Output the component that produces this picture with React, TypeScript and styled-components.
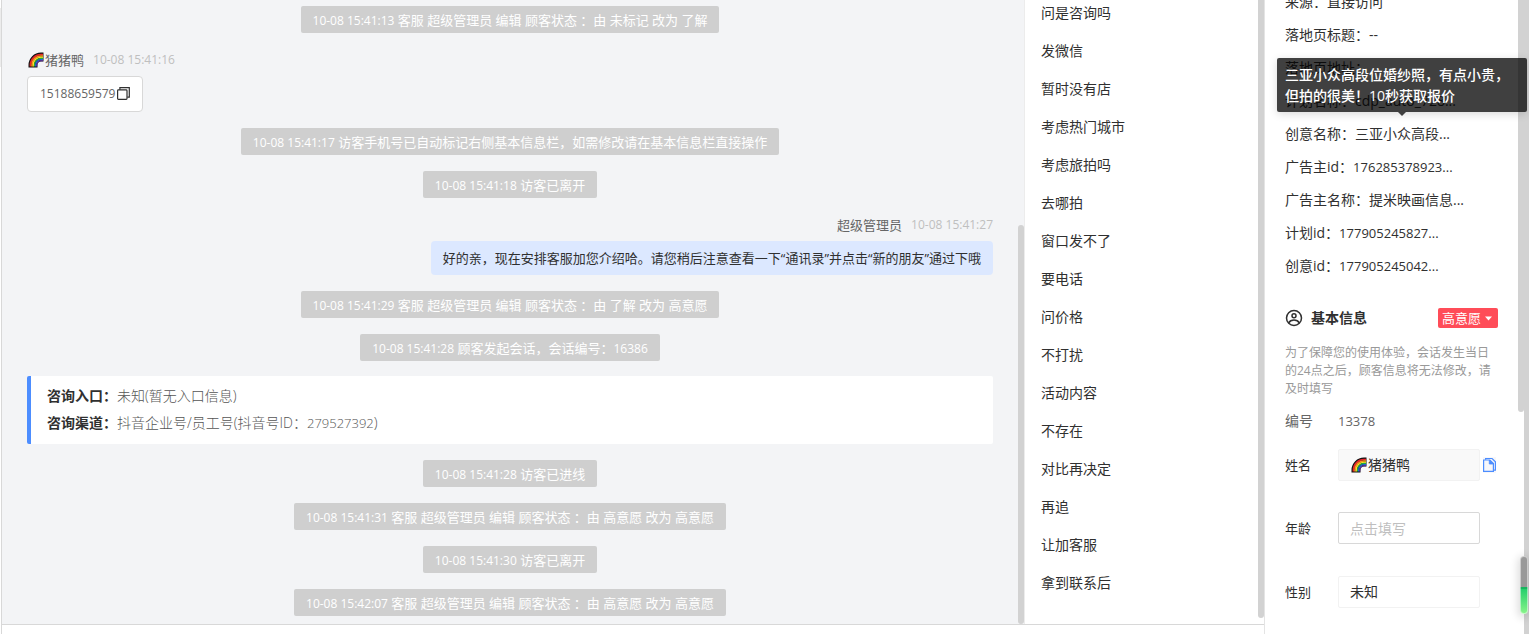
import React from 'react';
import styled, { createGlobalStyle } from 'styled-components';

const Global = createGlobalStyle`
  * { box-sizing: border-box; }
  body {
    margin: 0;
    background: #fff;
    color: #303030;
    font: 14px/20px 'Open Sans', 'Noto Sans CJK SC', sans-serif;
  }
  button, input, select { font: inherit; color: inherit; }
`;

const Page = styled.div`
  display: flex;
  height: 100vh;
  overflow: hidden;
`;

const Rail = styled.div`
  flex: none;
  width: 2px;
  border-right: 1px solid #d8d8d8;
  &::before {
    content: '';
    display: block;
    height: 59px;
    margin-top: 8px;
    background: #ececec;
  }
`;

const Workspace = styled.div`
  flex: 1;
  min-width: 0;
  display: flex;
  flex-direction: column;
`;

const Columns = styled.div`
  flex: 1;
  min-height: 0;
  display: flex;
`;

const Composer = styled.div`
  flex: none;
  height: 10px;
  border-top: 1px solid #d8d8d8;
`;

const Chat = styled.main`
  flex: 1;
  min-width: 0;
  display: flex;
  background: #f3f4f6;
  overflow: hidden;
`;

const Messages = styled.div`
  flex: 1;
  min-width: 0;
  padding: 6px 25px 0;
  display: flex;
  flex-direction: column;
  gap: 16px;
  font-size: 13px;
`;

const Notice = styled.div`
  flex: none;
  align-self: center;
  height: 27px;
  padding: 0 12px;
  border-radius: 2px;
  background: #cfcfcf;
  color: #fff;
  line-height: 28px;
  white-space: nowrap;
`;

const Digits = styled.span<{ $size?: number }>`
  font-size: ${p => p.$size ?? 12}px;
`;

const Message = styled.div<{ $own?: boolean }>`
  display: flex;
  flex-direction: column;
  align-items: ${p => (p.$own ? 'flex-end' : 'flex-start')};
  gap: 5px;
`;

const Sender = styled.div`
  display: flex;
  align-items: center;
  color: #666;
  line-height: 22px;
`;

const Stamp = styled.time`
  margin-left: 9px;
  color: #bfbfbf;
  font-size: 12px;
`;

const Bubble = styled.div<{ $own?: boolean }>`
  display: flex;
  align-items: center;
  gap: 2px;
  height: ${p => (p.$own ? 34 : 36)}px;
  padding: 0 12px;
  border: ${p => (p.$own ? '0' : '1px solid #d8d8d8')};
  border-radius: 4px;
  background: ${p => (p.$own ? '#dce8ff' : '#fff')};
  color: ${p => (p.$own ? '#303030' : '#666')};
  white-space: nowrap;
`;

const IconButton = styled.button`
  display: flex;
  padding: 0;
  border: 0;
  background: none;
  color: #303030;
  cursor: pointer;
`;

const SourceCard = styled.dl`
  margin: -1px 0 0;
  padding: 6px 16px 8px;
  height: 68px;
  border-left: 4px solid #4c8dff;
  border-radius: 2px;
  background: #fff;
  font-size: 14px;
  line-height: 27px;
`;

const SourceLine = styled.div`
  display: flex;
  dt { font-weight: 700; }
  dd { margin: 0; color: #555; font-weight: 300; }
`;

const ScrollTrack = styled.div`
  flex: none;
  display: flex;
  flex-direction: column;
  width: 6px;
`;

const Thumb = styled.div<{ $size: number; $atEnd?: boolean }>`
  flex: none;
  height: ${p => p.$size}%;
  margin-top: ${p => (p.$atEnd ? 'auto' : '0')};
  border-radius: ${p => (p.$atEnd ? '3px' : '0 0 3px 3px')};
  background: #d2d2d2;
`;

const Tags = styled.aside`
  flex: none;
  width: 240px;
  display: flex;
  border-left: 1px solid #ececec;
`;

const TagList = styled.ul`
  flex: 1;
  margin: -6px 0 0;
  padding: 0 16px;
  list-style: none;
  line-height: 38px;
`;

const Details = styled.aside`
  flex: none;
  width: 260px;
  display: flex;
  border-left: 1px solid #e4e4e4;
`;

const DetailsBody = styled.div`
  flex: 1;
  min-width: 0;
  padding-left: 20px;
`;

const Facts = styled.dl`
  margin: -15px 0 0;
  line-height: 33px;
`;

const Fact = styled.div`
  position: relative;
  display: flex;
  height: 33px;
  white-space: nowrap;
  dd { margin: 0; }
`;

const Tooltip = styled.div`
  position: absolute;
  z-index: 2;
  left: -8px;
  bottom: 38px;
  width: 250px;
  padding: 6px 8px;
  border-radius: 2px;
  background: rgba(0, 0, 0, 0.75);
  box-shadow: 0 2px 8px rgba(0, 0, 0, 0.15);
  color: #fff;
  line-height: 21px;
  font-weight: 500;
  white-space: normal;
  &::after {
    content: '';
    position: absolute;
    top: 100%;
    left: 50%;
    margin-left: -4px;
    border: 4px solid transparent;
    border-bottom: 0;
    border-top-color: #404040;
  }
`;

const Head = styled.div`
  display: flex;
  align-items: center;
  height: 20px;
  margin: 26px 20px 0 0;
  h2 { flex: 1; margin: 0 0 0 8px; font-size: 14px; font-weight: 700; line-height: 20px; }
`;

const Status = styled.button`
  display: flex;
  align-items: center;
  gap: 4px;
  width: 60px;
  height: 20px;
  padding: 0 4px;
  border: 0;
  border-radius: 2px;
  background: #ff4c58;
  color: #fff;
  font-size: 13px;
  line-height: 20px;
  white-space: nowrap;
`;

const Hint = styled.p`
  margin: 16px 22px 0 0;
  color: #999;
  font-size: 12px;
  line-height: 18px;
`;

const Row = styled.div<{ $gap: number; $muted?: boolean }>`
  display: flex;
  align-items: center;
  min-height: 32px;
  margin-top: ${p => p.$gap}px;
  color: ${p => (p.$muted ? '#666' : '#303030')};
`;

const Label = styled.label<{ $size: number }>`
  width: 53px;
  font-size: ${p => p.$size}px;
`;

const field = `
  width: 142px;
  height: 32px;
  padding: 0 11px;
  border-radius: 2px;
  font-size: 14px;
  outline: 0;
`;

const NameBox = styled.div`
  display: flex;
  align-items: center;
  background: #f9f9f9;
  border: 1px solid #f2f2f2;
  ${field}
  input { flex: 1; min-width: 0; padding: 0; border: 0; background: none; outline: 0; }
`;

const TextInput = styled.input`
  border: 1px solid #d8d8d8;
  background: #fff;
  ${field}
  &::placeholder { color: #bfbfbf; opacity: 1; }
`;

const Select = styled.select`
  appearance: none;
  border: 1px solid #f2f2f2;
  background: #fff;
  ${field}
`;

const CopyButton = styled(IconButton)`
  margin-left: 3px;
  background: #f7f7fa;
`;

const WindowScroll = styled.div`
  flex: none;
  position: relative;
  width: 5px;
  background: #d2d2d2;
`;

const Meter = styled.div`
  position: absolute;
  right: 1px;
  bottom: 20px;
  width: 8px;
  height: 58px;
  border: 1px solid rgba(255, 255, 255, 0.5);
  border-radius: 4px;
  background: linear-gradient(#999 0 31px, #18b45e 31px 33px, #25cf6c 33px, #8af58a) border-box;
  box-shadow: 0 2px 8px 2px rgba(0, 0, 0, 0.14);
`;

const Emoji = styled.svg`
  flex: none;
  margin: 0 1px;
`;

const Rainbow = () => (
  <Emoji width="16" height="16" viewBox="0 0 16 16" fill="none" aria-hidden="true">
    <path d="M.5 15.500V13A12.500 12.500 0 0 1 13 .5h2.500v9H13A3.500 3.500 0 0 0 9.500 13v2.500z" fill="#111" />
    <path d="M2.500 14.500V13A10.500 10.500 0 0 1 13 2.500h2" stroke="#e8262a" strokeWidth="1.700" />
    <path d="M4 14.500V13a9 9 0 0 1 9-9h2" stroke="#f7941d" strokeWidth="1.500" />
    <path d="M5.300 14.500V13A7.700 7.700 0 0 1 13 5.300h2" stroke="#fde428" strokeWidth="1.300" />
    <path d="M6.500 14.500V13A6.500 6.500 0 0 1 13 6.500h2" stroke="#1faa3c" strokeWidth="1.300" />
    <path d="M7.700 14.500V13A5.300 5.300 0 0 1 13 7.700h2" stroke="#2465d8" strokeWidth="1.300" />
    <path d="M8.800 14.500V13A4.200 4.200 0 0 1 13 8.800h2" stroke="#7038b0" strokeWidth="1" />
  </Emoji>
);

const CopyIcon = () => (
  <svg width="13" height="15" viewBox="0 0 13 15" fill="none" stroke="currentColor" strokeWidth="1.200" aria-hidden="true">
    <rect x="0.600" y="2.900" width="9.400" height="9.400" rx="0.800" />
    <path d="M2.900 2.700V.7h9.400v9.400h-2" />
  </svg>
);

const PagesIcon = () => (
  <svg width="13" height="16" viewBox="0 0 13 16" fill="none" stroke="#4c8dff" aria-hidden="true">
    <path d="M.6 3h6.200l3.600 3.600v7.800H.6z" strokeWidth="1.200" />
    <path d="M6.300 3v4h4z" fill="#4c8dff" strokeWidth="0.800" />
    <path d="M2.600 2.800V1.500h6.500l3.300 3.200v8.500h-1.800" strokeWidth="1.200" />
  </svg>
);

const UserIcon = () => (
  <svg width="18" height="18" viewBox="0 0 18 18" fill="none" stroke="#303030" strokeWidth="1.500" aria-hidden="true">
    <circle cx="9" cy="9" r="7.500" />
    <circle cx="9" cy="6.800" r="2" />
    <path d="M3.500 14c1.500-2.300 3.300-2.900 5.500-2.900s4 .6 5.500 2.900" />
  </svg>
);

const Caret = () => (
  <svg width="7" height="5" viewBox="0 0 7 5" aria-hidden="true"><path d="M0 .5h7L3.500 4.500z" fill="#fff" /></svg>
);

const LogLine = ({ time, children }: { time: string; children: React.ReactNode }) => (
  <Notice><Digits>{time}</Digits> {children}</Notice>
);

const tags = ['问是咨询吗', '发微信', '暂时没有店', '考虑热门城市', '考虑旅拍吗', '去哪拍', '窗口发不了', '要电话',
  '问价格', '不打扰', '活动内容', '不存在', '对比再决定', '再追', '让加客服', '拿到联系后'];

const facts: { label: string; text?: string; digits?: string; tip?: string }[] = [
  { label: '来源', text: '直接访问' },
  { label: '落地页标题', text: '--' },
  { label: '落地页地址', text: '' },
  { label: '计划名称', text: 'cdp_auto_728...' },
  { label: '创意名称', text: '三亚小众高段...', tip: '三亚小众高段位婚纱照，有点小贵，但拍的很美！10秒获取报价' },
  { label: '广告主id', digits: '176285378923...' },
  { label: '广告主名称', text: '提米映画信息...' },
  { label: '计划id', digits: '177905245827...' },
  { label: '创意id', digits: '177905245042...' },
];

export default function App() {
  return (
    <>
      <Global />
      <Page>
        <Rail />
        <Workspace>
          <Columns>
            <Chat>
              <Messages>
                <LogLine time="10-08 15:41:13">客服 超级管理员 编辑 顾客状态 ：由 未标记 改为 了解</LogLine>
                <Message>
                  <Sender><Rainbow />猪猪鸭<Stamp>10-08 15:41:16</Stamp></Sender>
                  <Bubble>
                    <Digits>15188659579</Digits>
                    <IconButton aria-label="复制"><CopyIcon /></IconButton>
                  </Bubble>
                </Message>
                <LogLine time="10-08 15:41:17">访客手机号已自动标记右侧基本信息栏，如需修改请在基本信息栏直接操作</LogLine>
                <LogLine time="10-08 15:41:18">访客已离开</LogLine>
                <Message $own>
                  <Sender>超级管理员<Stamp>10-08 15:41:27</Stamp></Sender>
                  <Bubble $own>好的亲，现在安排客服加您介绍哈。请您稍后注意查看一下“通讯录”并点击“新的朋友”通过下哦</Bubble>
                </Message>
                <LogLine time="10-08 15:41:29">客服 超级管理员 编辑 顾客状态 ：由 了解 改为 高意愿</LogLine>
                <LogLine time="10-08 15:41:28">顾客发起会话，会话编号：<Digits>16386</Digits></LogLine>
                <SourceCard>
                  <SourceLine><dt>咨询入口：</dt><dd>未知(暂无入口信息)</dd></SourceLine>
                  <SourceLine><dt>咨询渠道：</dt><dd>抖音企业号/员工号(抖音号ID：<Digits $size={13}>279527392</Digits>)</dd></SourceLine>
                </SourceCard>
                <LogLine time="10-08 15:41:28">访客已进线</LogLine>
                <LogLine time="10-08 15:41:31">客服 超级管理员 编辑 顾客状态 ：由 高意愿 改为 高意愿</LogLine>
                <LogLine time="10-08 15:41:30">访客已离开</LogLine>
                <LogLine time="10-08 15:42:07">客服 超级管理员 编辑 顾客状态 ：由 高意愿 改为 高意愿</LogLine>
              </Messages>
              <ScrollTrack><Thumb $size={64} $atEnd /></ScrollTrack>
            </Chat>
            <Tags>
              <TagList>{tags.map(t => <li key={t}>{t}</li>)}</TagList>
              <ScrollTrack><Thumb $size={99} /></ScrollTrack>
            </Tags>
          </Columns>
          <Composer />
        </Workspace>
        <Details>
          <DetailsBody>
            <Facts>
              {facts.map(f => (
                <Fact key={f.label}>
                  <dt>{f.label}：</dt>
                  <dd>{f.digits ? <Digits $size={13}>{f.digits}</Digits> : f.text}</dd>
                  {f.tip && <Tooltip role="tooltip">{f.tip}</Tooltip>}
                </Fact>
              ))}
            </Facts>
            <Head>
              <UserIcon />
              <h2>基本信息</h2>
              <Status>高意愿<Caret /></Status>
            </Head>
            <Hint>为了保障您的使用体验，会话发生当日的24点之后，顾客信息将无法修改，请及时填写</Hint>
            <Row $gap={7} $muted><Label as="span" $size={14}>编号</Label><Digits $size={13}>13378</Digits></Row>
            <Row $gap={12}>
              <Label $size={13} htmlFor="name">姓名</Label>
              <NameBox><Rainbow /><input id="name" defaultValue="猪猪鸭" /></NameBox>
              <CopyButton aria-label="复制姓名"><PagesIcon /></CopyButton>
            </Row>
            <Row $gap={31}>
              <Label $size={13} htmlFor="age">年龄</Label>
              <TextInput id="age" placeholder="点击填写" />
            </Row>
            <Row $gap={32}>
              <Label $size={13} htmlFor="gender">性别</Label>
              <Select id="gender"><option>未知</option></Select>
            </Row>
          </DetailsBody>
          <ScrollTrack><Thumb $size={65} /></ScrollTrack>
        </Details>
        <WindowScroll><Meter /></WindowScroll>
      </Page>
    </>
  );
}
